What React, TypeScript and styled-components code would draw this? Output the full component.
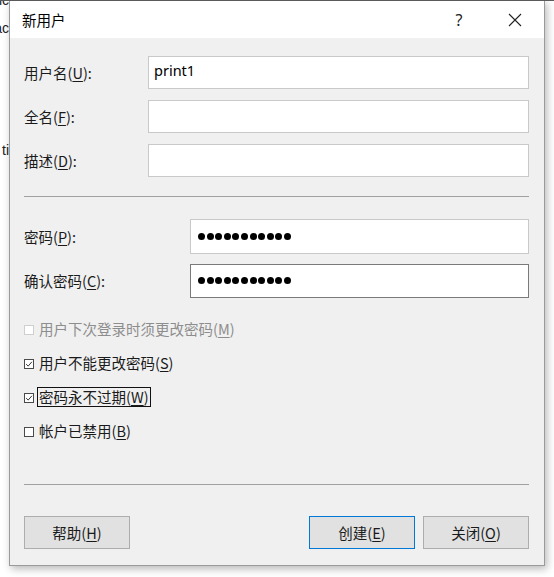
import React from "react";
import styled, { createGlobalStyle } from "styled-components";

const GlobalStyle = createGlobalStyle`
  html, body {
    margin: 0;
    padding: 0;
    background: #ffffff;
  }
  body {
    font-family: "Noto Sans CJK SC", "Noto Sans", sans-serif;
    font-size: 14.5px;
    color: #000;
  }
`;

const Desktop = styled.div`
  display: flex;
  width: 554px;
  height: 577px;
  overflow: hidden;
  background: #fff;
  border-top: 1px solid #5a5a5a;
  box-sizing: border-box;
`;

const BehindStrip = styled.div`
  width: 9px;
  flex: none;
  overflow: hidden;
  display: flex;
  flex-direction: column;
  font-family: "Liberation Sans", sans-serif;
  font-size: 14px;
  color: #222;
  line-height: 1;
  white-space: nowrap;
  direction: rtl;
`;

const BehindWord = styled.span<{ $top: number }>`
  margin-top: ${(p) => p.$top}px;
`;

const Window = styled.div`
  width: 536px;
  height: 566px;
  flex: none;
  margin-top: -1px;
  border: 1px solid #9a9a9a;
  box-sizing: border-box;
  background: #f0f0f0;
  display: flex;
  flex-direction: column;
  box-shadow: 2px 3px 8px rgba(0, 0, 0, 0.28);
`;

const TitleBar = styled.div`
  height: 37px;
  flex: none;
  background: #fff;
  display: flex;
  align-items: center;
  padding-left: 12px;
`;

const Title = styled.span`
  flex: 1;
  font-size: 14.5px;
  color: #000;
`;

const CaptionButton = styled.div`
  width: 46px;
  height: 37px;
  display: flex;
  align-items: center;
  justify-content: center;
  font-family: "Noto Sans", sans-serif;
  font-size: 16px;
  color: #222;
`;

const CaptionGap = styled.div<{ $w: number }>`
  width: ${(p) => p.$w}px;
`;

const Body = styled.div`
  flex: 1;
  display: flex;
  flex-direction: column;
  padding: 18px 15px 0 14px;
`;

const FieldGrid = styled.div<{ $labelWidth: number; $gap: number }>`
  display: grid;
  grid-template-columns: ${(p) => p.$labelWidth}px 1fr;
  row-gap: ${(p) => p.$gap}px;
  align-items: center;
`;

const Label = styled.label`
  font-size: 14.5px;
  line-height: 20px;
  color: #1a1a1a;
`;

const Mn = styled.span`
  text-decoration: underline;
  text-underline-offset: 2px;
  text-decoration-thickness: 1px;
`;

const TextBox = styled.div<{ $h: number; $focused?: boolean }>`
  height: ${(p) => p.$h}px;
  box-sizing: border-box;
  background: #fff;
  border: 1px solid ${(p) => (p.$focused ? "#7a7a7a" : "#c9c9c9")};
  display: flex;
  align-items: center;
  padding: 0 0 6px 5px;
  font-family: "Noto Sans", sans-serif;
  font-size: 14.5px;
  color: #000;
`;

const Dots = styled.div`
  display: flex;
  gap: 1.6px;
  padding: 5px 0 0 2px;
`;

const Dot = styled.span`
  width: 7px;
  height: 7px;
  border-radius: 50%;
  background: #000;
`;

const Divider = styled.div<{ $above: number; $below: number }>`
  height: 1px;
  background: #a0a0a0;
  margin: ${(p) => p.$above}px 0 ${(p) => p.$below}px;
`;

const CheckList = styled.div`
  display: flex;
  flex-direction: column;
  margin-top: 14px;
`;

const CheckRow = styled.div<{ $disabled?: boolean }>`
  height: 34px;
  display: flex;
  align-items: center;
  gap: 3px;
  color: ${(p) => (p.$disabled ? "#8d8d8d" : "#1a1a1a")};
  font-size: 14.5px;
`;

const Box = styled.span<{ $disabled?: boolean }>`
  width: 10px;
  height: 10px;
  box-sizing: border-box;
  border: 1px solid ${(p) => (p.$disabled ? "#cfcfcf" : "#4a4a4a")};
  background: #fff;
  display: flex;
  align-items: center;
  justify-content: center;
  margin-top: 1px;
`;

const CheckText = styled.span<{ $focused?: boolean }>`
  line-height: 18px;
  padding: 0 1px;
  border: 1px solid ${(p) => (p.$focused ? "#111" : "transparent")};
`;

const ButtonRow = styled.div`
  display: flex;
  align-items: center;
  margin-top: 31px;
`;

const Spacer = styled.div`
  flex: 1;
`;

const Button = styled.div<{ $primary?: boolean }>`
  width: 106px;
  height: 33px;
  box-sizing: border-box;
  background: #e1e1e1;
  border: 1px solid ${(p) => (p.$primary ? "#0078d7" : "#adadad")};
  display: flex;
  align-items: center;
  justify-content: center;
  font-size: 14.5px;
  color: #1a1a1a;
  margin-left: ${(p) => (p.$primary ? 0 : 8)}px;
  &:first-child {
    margin-left: 0;
  }
`;

const CheckMark = () => (
  <svg width="8" height="8" viewBox="0 0 8 8">
    <path d="M1.2 4.2 L3.2 6.1 L6.9 1.8" fill="none" stroke="#333" strokeWidth="1" />
  </svg>
);

const CloseIcon = () => (
  <svg width="14" height="14" viewBox="0 0 14 14">
    <path d="M1 1 L13 13 M13 1 L1 13" stroke="#222" strokeWidth="1.1" />
  </svg>
);

const Password: React.FC<{ count: number }> = ({ count }) => (
  <Dots>
    {Array.from({ length: count }).map((_, i) => (
      <Dot key={i} />
    ))}
  </Dots>
);

const checks = [
  { text: "用户下次登录时须更改密码", key: "M", checked: false, disabled: true },
  { text: "用户不能更改密码", key: "S", checked: true },
  { text: "密码永不过期", key: "W", checked: true, focused: true },
  { text: "帐户已禁用", key: "B", checked: false },
];

export default function App() {
  return (
    <>
      <GlobalStyle />
      <Desktop>
        <BehindStrip>
          <BehindWord $top={-8}>ic</BehindWord>
          <BehindWord $top={14}>ac</BehindWord>
          <BehindWord $top={108}>ti</BehindWord>
        </BehindStrip>
        <Window>
          <TitleBar>
            <Title>新用户</Title>
            <CaptionButton>?</CaptionButton>
            <CaptionGap $w={10} />
            <CaptionButton>
              <CloseIcon />
            </CaptionButton>
            <CaptionGap $w={6} />
          </TitleBar>
          <Body>
            <FieldGrid $labelWidth={124} $gap={11}>
              <Label>
                用户名(<Mn>U</Mn>):
              </Label>
              <TextBox $h={33}>print1</TextBox>
              <Label>
                全名(<Mn>F</Mn>):
              </Label>
              <TextBox $h={33} />
              <Label>
                描述(<Mn>D</Mn>):
              </Label>
              <TextBox $h={33} />
            </FieldGrid>
            <Divider $above={19} $below={22} />
            <FieldGrid $labelWidth={166} $gap={10}>
              <Label>
                密码(<Mn>P</Mn>):
              </Label>
              <TextBox $h={35}>
                <Password count={11} />
              </TextBox>
              <Label>
                确认密码(<Mn>C</Mn>):
              </Label>
              <TextBox $h={34} $focused>
                <Password count={11} />
              </TextBox>
            </FieldGrid>
            <CheckList>
              {checks.map((c) => (
                <CheckRow key={c.key} $disabled={c.disabled}>
                  <Box $disabled={c.disabled}>{c.checked && <CheckMark />}</Box>
                  <CheckText $focused={c.focused}>
                    {c.text}(<Mn>{c.key}</Mn>)
                  </CheckText>
                </CheckRow>
              ))}
            </CheckList>
            <Divider $above={36} $below={0} />
            <ButtonRow>
              <Button>
                帮助(<Mn>H</Mn>)
              </Button>
              <Spacer />
              <Button $primary>
                创建(<Mn>E</Mn>)
              </Button>
              <Button>
                关闭(<Mn>O</Mn>)
              </Button>
            </ButtonRow>
          </Body>
        </Window>
      </Desktop>
    </>
  );
}
